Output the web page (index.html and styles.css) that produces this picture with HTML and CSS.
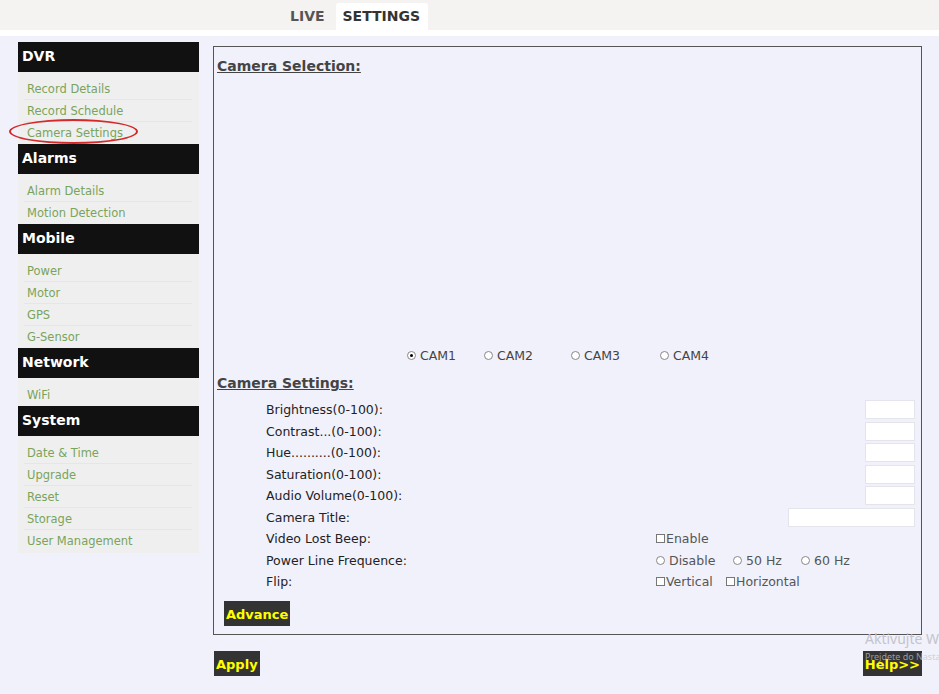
FILE: index.html
```html
<!DOCTYPE html>
<html>
<head>
<meta charset="utf-8">
<link rel="stylesheet" href="styles.css">
</head>
<body>
<div class="topbar">
  <div class="tabs">
    <span class="tab">LIVE</span>
    <span class="tab active">SETTINGS</span>
  </div>
</div>
<div class="strip"></div>
<div class="page">
  <nav class="sidebar">
    <div class="sec-head">DVR</div>
    <ul class="sec-items">
      <li>Record Details</li>
      <li>Record Schedule</li>
      <li class="circled">Camera Settings<span class="ring"></span></li>
    </ul>
    <div class="sec-head">Alarms</div>
    <ul class="sec-items">
      <li>Alarm Details</li>
      <li>Motion Detection</li>
    </ul>
    <div class="sec-head">Mobile</div>
    <ul class="sec-items">
      <li>Power</li>
      <li>Motor</li>
      <li>GPS</li>
      <li>G-Sensor</li>
    </ul>
    <div class="sec-head">Network</div>
    <ul class="sec-items">
      <li>WiFi</li>
    </ul>
    <div class="sec-head">System</div>
    <ul class="sec-items">
      <li>Date &amp; Time</li>
      <li>Upgrade</li>
      <li>Reset</li>
      <li>Storage</li>
      <li>User Management</li>
    </ul>
  </nav>
  <div class="content">
    <section class="panel">
      <h2 class="title">Camera Selection:</h2>
      <div class="video"></div>
      <div class="cams">
        <span class="opt cam1"><span class="radio on"></span>CAM1</span>
        <span class="opt cam2"><span class="radio"></span>CAM2</span>
        <span class="opt cam3"><span class="radio"></span>CAM3</span>
        <span class="opt cam4"><span class="radio"></span>CAM4</span>
      </div>
      <h2 class="title t2">Camera Settings:</h2>
      <div class="settings">
        <div class="lbl">Brightness(0-100):</div><div class="ctl"><span class="inp"></span></div>
        <div class="lbl">Contrast...(0-100):</div><div class="ctl"><span class="inp"></span></div>
        <div class="lbl">Hue..........(0-100):</div><div class="ctl"><span class="inp"></span></div>
        <div class="lbl">Saturation(0-100):</div><div class="ctl"><span class="inp"></span></div>
        <div class="lbl">Audio Volume(0-100):</div><div class="ctl"><span class="inp"></span></div>
        <div class="lbl">Camera Title:</div><div class="ctl"><span class="inp wide"></span></div>
        <div class="lbl">Video Lost Beep:</div><div class="ctl left"><span class="chk"></span>Enable</div>
        <div class="lbl">Power Line Frequence:</div><div class="ctl left"><span class="opt o1"><span class="radio"></span>Disable</span><span class="opt o2"><span class="radio"></span>50 Hz</span><span class="opt"><span class="radio"></span>60 Hz</span></div>
        <div class="lbl">Flip:</div><div class="ctl left"><span class="opt o3"><span class="chk"></span>Vertical</span><span class="opt"><span class="chk"></span>Horizontal</span></div>
      </div>
      <div class="adv-row"><span class="btn">Advance</span></div>
    </section>
    <div class="actions">
      <span class="btn">Apply</span>
      <span class="btn">Help&gt;&gt;</span>
    </div>
  </div>
</div>
<div class="watermark">
  <div class="wm1">Aktivujte Windows</div>
  <div class="wm2">Prejdete do Nastavení</div>
</div>
</body>
</html>
```
FILE: styles.css
```css
html, body {
  margin: 0;
  padding: 0;
}
body {
  width: 939px;
  height: 694px;
  overflow: hidden;
  background: #f1f1fb;
  font-family: "DejaVu Sans", Verdana, sans-serif;
  font-size: 12.5px;
  color: #333;
  position: relative;
}
.topbar {
  height: 30px;
  background: #f4f3f1;
  display: flex;
  align-items: flex-end;
}
.tabs {
  display: flex;
  align-items: flex-end;
  padding-left: 282px;
  height: 30px;
}
.tab {
  font-weight: bold;
  font-size: 14px;
  color: #555;
  padding: 0 7px 0 8px;
  height: 27px;
  line-height: 27px;
}
.tab.active {
  background: #ffffff;
  color: #333;
  border-radius: 3px 3px 0 0;
  margin-left: 4px;
  padding: 0 8px 0 7px;
}
.strip {
  height: 6px;
  background: #ffffff;
}
.page {
  display: flex;
  align-items: flex-start;
  padding: 6px 17px 0 18px;
  gap: 14px;
}
.sidebar {
  width: 181px;
  flex: none;
  background: #efeff0;
  padding-bottom: 1px;
}
.sec-head {
  background: #111111;
  color: #ffffff;
  font-weight: bold;
  font-size: 14px;
  height: 30px;
  line-height: 28px;
  padding-left: 4px;
}
.sec-items {
  list-style: none;
  margin: 0;
  padding: 6px 0 1px;
}
.sec-items li {
  height: 21px;
  line-height: 22px;
  margin: 0 7px 0 6px;
  padding-left: 3px;
  border-bottom: 1px solid #e6e6e8;
  color: #7aa45a;
  font-size: 11.5px;
  position: relative;
}
.sec-items li:last-child {
  border-bottom: none;
}
.ring {
  position: absolute;
  left: -15px;
  top: -3px;
  width: 125px;
  height: 21px;
  border: 2px solid #d62a2a;
  border-radius: 50%;
  pointer-events: none;
}
.content {
  flex: 1;
  display: flex;
  flex-direction: column;
}
.panel {
  margin-top: 4px;
  border: 1px solid #555;
  height: 587px;
  padding: 0 6px 0 3px;
  display: flex;
  flex-direction: column;
}
.title {
  margin: 0;
  font-size: 14px;
  font-weight: bold;
  text-decoration: underline;
  color: #444;
  line-height: 18px;
  padding-top: 10px;
}
.t2 {
  padding-top: 0;
  margin-top: 9px;
}
.video {
  height: 270px;
}
.cams {
  display: flex;
  padding-left: 190px;
  height: 20px;
  align-items: center;
  color: #444;
}
.opt {
  display: inline-flex;
  align-items: center;
}
.cam1 { width: 77px; }
.cam2 { width: 87px; }
.cam3 { width: 89px; }
.radio {
  display: inline-block;
  width: 7px;
  height: 7px;
  border: 1px solid #888;
  border-radius: 50%;
  background: #fff;
  margin-right: 4px;
  position: relative;
  box-sizing: content-box;
}
.radio.on::after {
  content: "";
  position: absolute;
  left: 2px;
  top: 2px;
  width: 3px;
  height: 3px;
  border-radius: 50%;
  background: #000;
}
.settings {
  display: grid;
  grid-template-columns: 1fr 259px;
  grid-auto-rows: 21.5px;
  margin-top: 7px;
}
.lbl {
  padding-left: 49px;
  line-height: 21.5px;
  color: #222;
}
.ctl {
  display: flex;
  justify-content: flex-end;
  align-items: center;
}
.ctl.left {
  justify-content: flex-start;
  color: #555;
}
.inp {
  display: block;
  width: 48px;
  height: 17px;
  background: #fff;
  border: 1px solid #e4e4ec;
}
.inp.wide {
  width: 125px;
}
.chk {
  display: inline-block;
  width: 7px;
  height: 7px;
  border: 1px solid #777;
  background: #fff;
  margin-right: 1px;
}
.o1 { width: 77px; }
.o2 { width: 68px; }
.o3 { width: 70px; }
.adv-row {
  margin-top: auto;
  padding: 0 0 8px 7px;
}
.btn {
  display: inline-block;
  background: #333333;
  color: #ffff00;
  font-weight: bold;
  font-size: 13px;
  height: 25px;
  line-height: 27px;
  padding: 0 2px;
}
.actions {
  display: flex;
  justify-content: space-between;
  margin-top: 16px;
  padding-left: 1px;
}
.watermark {
  position: absolute;
  left: 865px;
  top: 630px;
  width: 74px;
  overflow: hidden;
  color: #c4c4cc;
  pointer-events: none;
  white-space: nowrap;
  font-family: "Noto Sans", sans-serif;
}
.wm1 {
  font-size: 14px;
  line-height: 18px;
}
.wm2 {
  font-size: 9px;
  line-height: 12px;
  margin-top: 3px;
  opacity: 0.7;
}
```
